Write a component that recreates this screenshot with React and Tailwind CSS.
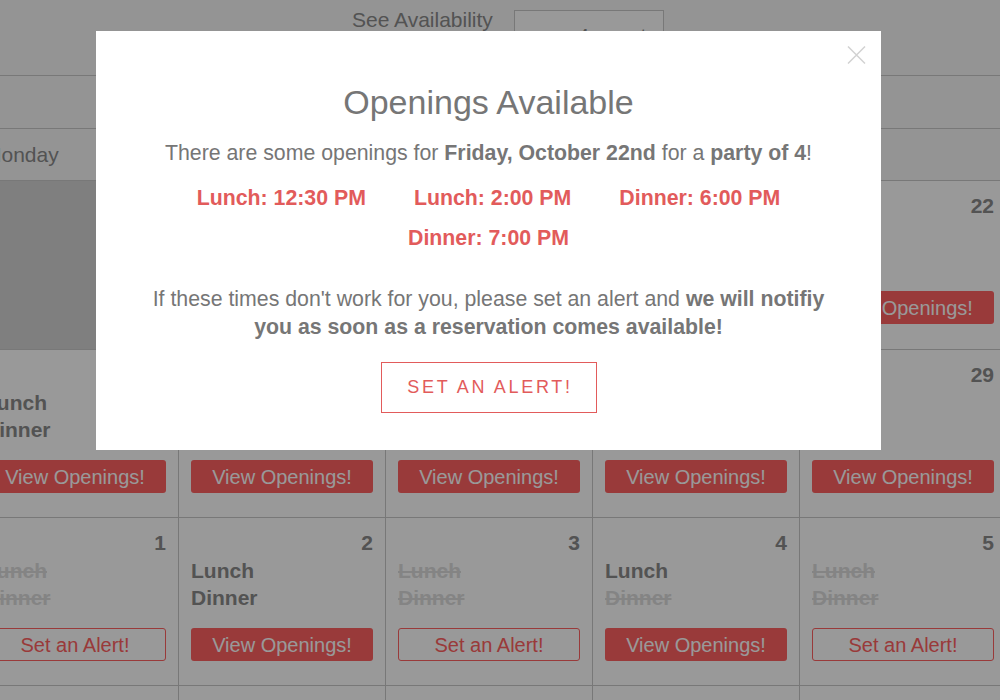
import React from "react";

const dayNames = ["Monday", "Tuesday", "Wednesday", "Thursday", "Friday"];

// l / dn = lunch / dinner has openings
const weeks = [
  [
    { d: 18, past: true },
    { d: 19, l: true, dn: false },
    { d: 20, l: true, dn: true },
    { d: 21, l: false, dn: true },
    { d: 22, l: true, dn: true },
  ],
  [
    { d: 25, l: true, dn: true },
    { d: 26, l: true, dn: true },
    { d: 27, l: true, dn: false },
    { d: 28, l: false, dn: true },
    { d: 29, l: true, dn: true },
  ],
  [
    { d: 1, l: false, dn: false },
    { d: 2, l: true, dn: true },
    { d: 3, l: false, dn: false },
    { d: 4, l: true, dn: false },
    { d: 5, l: false, dn: false },
  ],
  [
    { d: 8, l: true, dn: true },
    { d: 9, l: true, dn: true },
    { d: 10, l: false, dn: false },
    { d: 11, l: true, dn: true },
    { d: 12, l: true, dn: false },
  ],
];

const times = ["Lunch: 12:30 PM", "Lunch: 2:00 PM", "Dinner: 6:00 PM", "Dinner: 7:00 PM"];

const Meal = ({ open, children }) => (
  <div className={open ? "text-[#8a8a8a]" : "text-[#dcdcdc] line-through"}>{children}</div>
);

const DayCell = ({ day }) => {
  if (day.past) {
    return <div className="border-r border-[#c8c8c8] bg-[#d4d4d4]" />;
  }
  const hasOpenings = day.l || day.dn;
  return (
    <div className="flex flex-col border-r border-[#c8c8c8] px-[12px] pt-[13px]">
      <div className="text-right text-[21px] font-bold leading-[24px] text-[#8a8a8a]">{day.d}</div>
      <div className="mt-[2px] text-[21px] font-bold leading-[27px]">
        <Meal open={day.l}>Lunch</Meal>
        <Meal open={day.dn}>Dinner</Meal>
      </div>
      {hasOpenings ? (
        <button className="mt-[17px] h-[33px] w-full rounded-[3px] bg-[#ff6161] text-[20px] text-white">
          View Openings!
        </button>
      ) : (
        <button className="mt-[17px] h-[33px] w-full rounded-[3px] border border-[#ff6161] bg-white text-[20px] text-[#ff6161]">
          Set an Alert!
        </button>
      )}
    </div>
  );
};

export default function App() {
  return (
    <div className="relative h-[700px] w-[1000px] overflow-hidden bg-white font-['Liberation_Sans',Arial,sans-serif]">
      {/* page behind the modal */}
      <div className="flex h-[76px] items-start border-b border-[#c8c8c8] bg-[#f7f7f7] pl-[352px] pt-[8px]">
        <div className="text-[21px] leading-[24px] text-[#8a8a8a]">See Availability</div>
        <div className="ml-[21px] mt-[2px] flex h-[48px] w-[150px] items-start justify-end border border-[#c8c8c8] bg-white pr-[6px] pt-[13px] text-[21px] leading-[24px] text-[#8a8a8a]">
          4 guests
        </div>
      </div>

      <div className="flex h-[53px] items-center justify-center gap-6 border-b border-[#c8c8c8] bg-[#f7f7f7] text-[21px] text-[#8a8a8a]">
        <span>‹</span>
        <span className="font-bold">October 2021</span>
        <span>›</span>
      </div>

      <div className="ml-[-28px] grid h-[52px] grid-cols-[repeat(5,207px)] items-center border-b border-[#c8c8c8] bg-[#f7f7f7] text-[21px] text-[#8a8a8a]">
        {dayNames.map((name) => (
          <div key={name} className="pl-[12px]">
            {name}
          </div>
        ))}
      </div>

      {weeks.map((week, i) => (
        <div
          key={i}
          className={`ml-[-28px] grid grid-cols-[repeat(5,207px)] border-b border-[#c8c8c8] ${
            i === 0 ? "h-[169px]" : "h-[168px]"
          }`}
        >
          {week.map((day) => (
            <DayCell key={day.d} day={day} />
          ))}
        </div>
      ))}

      {/* dim overlay */}
      <div className="absolute inset-0 bg-black/40" />

      {/* modal */}
      <div className="absolute left-[96px] top-[31px] h-[419px] w-[785px] bg-white px-[48px] pt-[51px] text-center text-[#767676]">
        <button className="absolute right-[15px] top-[15px]" aria-label="Close">
          <svg width="19" height="18" viewBox="0 0 19 18" fill="none" stroke="#d2d2d2" strokeWidth="1.5">
            <path d="M1 0.5 L18 17.5 M18 0.5 L1 17.5" />
          </svg>
        </button>

        <h2 className="text-[34px] leading-[40px]">Openings Available</h2>

        <p className="mt-[17px] text-[21.3px] leading-[28px]">
          There are some openings for <b>Friday, October 22nd</b> for a <b>party of 4</b>!
        </p>

        <div className="mt-[17px] flex flex-wrap justify-center gap-x-[48px] gap-y-[12px] text-[21.3px] font-bold leading-[28px] text-[#e25b5b]">
          {times.map((t) => (
            <span key={t}>{t}</span>
          ))}
        </div>

        <p className="mt-[33px] text-[21.3px] leading-[28px]">
          If these times don't work for you, please set an alert and{" "}
          <b>we will notifiy you as soon as a reservation comes available!</b>
        </p>

        <button className="mx-auto mt-[21px] flex h-[51px] w-[216px] items-center justify-center border border-[#e25b5b] pl-[3px] text-[18px] tracking-[2.7px] text-[#e25b5b]">
          SET AN ALERT!
        </button>
      </div>
    </div>
  );
}
